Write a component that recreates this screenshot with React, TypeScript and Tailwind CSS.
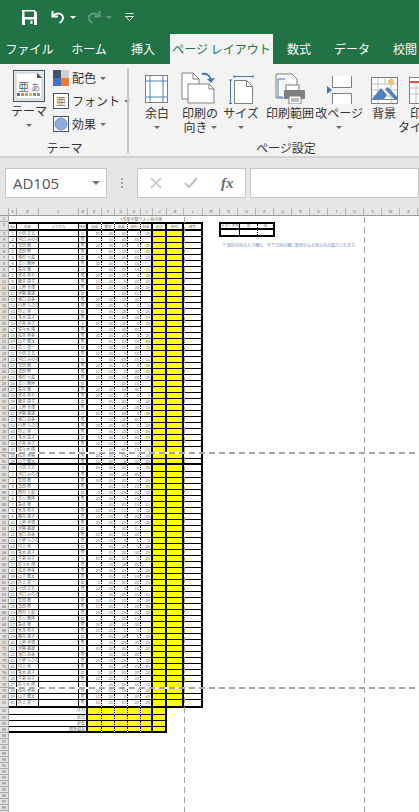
import React from "react";

const names = ["小田 正志","河口 みのる","安田 徹","高田 修","西村 七菜","吉川 雅伸","森本 徹","宮本 和与","藤井 靖子","上原 幸博","伊藤 義雄","坂口 由美","小原 ちひろ","村上 進","青木 昌子","中島 良子","佐々木 翔","松本 恵美","山下 健太","井上 真一"];
const s1 = ["45","","20","","5","32","","20","11","35","","20","20","",""];
const s2 = ["30","10","20","45","30","20","30","35","20","20","","30","20","45","15"];
const s3 = ["30","30","35","10","45","5","45","15","5","15","30","10","5","30","20"];
const s4 = ["5","45","5","15","20","10","15","4","20","20","11","30","5","5","30"];
const s5 = ["20","","20","45","10","","11","30","45","20","","","5","20","15"];
const gender = ["5","男","男","男","女","男","5","男","男","男","女","男","男","女","男"];

const cols = ["A","B","C","D","E","F","G","H","I","J","K","L","M","N","O","P","Q","R","S","T","U","V","W","X"];
const colW = ["w-[8px]","w-[22px]","w-[40px]","w-[9px]","w-[14px]","w-[13px]","w-[13px]","w-[13px]","w-[12px]","w-[14px]","w-[17px]","w-[19px]","w-[17px]","w-[18px]","w-[18px]","w-[18px]","w-[18px]","w-[18px]","w-[18px]","w-[18px]","w-[18px]","w-[18px]","w-[18px]","w-[18px]"];

const dot = "[border-right-style:dotted]";

function RowHead({ n, h }: { n: number; h: string }) {
  return (
    <div className={`${h} w-[9px] shrink-0 bg-[#e2e2e2] border-r border-b border-[#a8a8a8] text-[3.5px] leading-[5px] text-center text-[#555] overflow-hidden`}>
      {n}
    </div>
  );
}

function DataRow({ n, i, h, b }: { n: number; i: number; h: string; b: string }) {
  const k = i % 15;
  const c = `${b} border-black overflow-hidden whitespace-nowrap leading-[5px] text-[4px] text-[#666]`;
  return (
    <div className="flex">
      <RowHead n={n} h={h} />
      <div className={`${c} w-[8px] border-r text-center`}>{i + 1}</div>
      <div className={`${c} w-[22px] border-r pl-[1px]`}>{names[i % 20]}</div>
      <div className={`${c} w-[40px] border-r`}></div>
      <div className={`${c} w-[9px] border-r-2 text-center`}>{gender[k]}</div>
      <div className={`${c} w-[14px] border-r ${dot} text-right pr-[1px]`}>{s1[k]}</div>
      <div className={`${c} w-[13px] border-r ${dot} text-right pr-[1px]`}>{s2[k]}</div>
      <div className={`${c} w-[13px] border-r ${dot} text-right pr-[1px]`}>{s3[k]}</div>
      <div className={`${c} w-[13px] border-r ${dot} text-right pr-[1px]`}>{s4[k]}</div>
      <div className={`${c} w-[12px] border-r-2 text-right pr-[1px]`}>{s5[k]}</div>
      <div className={`${c} w-[14px] border-r-2 bg-[#ffff00]`}></div>
      <div className={`${c} w-[17px] border-r-2 bg-[#ffff00]`}></div>
      <div className={`${c} w-[19px] border-r-2`}></div>
    </div>
  );
}

function FootRow({ n, h, b, label }: { n: number; h: string; b: string; label: string }) {
  const c = `${b} border-black overflow-hidden bg-[#ffff00]`;
  return (
    <div className="flex">
      <RowHead n={n} h={h} />
      <div className={`${b} border-black border-r-2 w-[79px] text-right pr-[1px] text-[4px] leading-[5px] text-[#777]`}>{label}</div>
      <div className={`${c} w-[14px] border-r ${dot}`}></div>
      <div className={`${c} w-[13px] border-r ${dot}`}></div>
      <div className={`${c} w-[13px] border-r ${dot}`}></div>
      <div className={`${c} w-[13px] border-r ${dot}`}></div>
      <div className={`${c} w-[12px] border-r-2`}></div>
      <div className={`${c} w-[14px] border-r-2`}></div>
    </div>
  );
}

function Chev({ c = "border-t-[#6a6a6a]" }: { c?: string }) {
  return <span className={`inline-block w-0 h-0 border-x-[3px] border-x-transparent border-t-[3px] ${c}`} />;
}

function SmallBtn({ label, icon }: { label: string; icon: React.ReactNode }) {
  return (
    <div className="flex items-center h-[16px] text-[12px] text-[#333] whitespace-nowrap">
      <span className="w-[16px] h-[16px] shrink-0 mr-[3px]">{icon}</span>
      <span>{label}</span>
      <span className="ml-[4px] flex"><Chev /></span>
    </div>
  );
}

function Big({ w, ml, icon, l1, l2, chev }: { w: string; ml?: string; icon: React.ReactNode; l1: string; l2?: string; chev?: boolean }) {
  return (
    <div className={`${w} ${ml ?? ""} shrink-0 flex flex-col items-center`}>
      <div className="h-[36px] flex items-end justify-center w-full">{icon}</div>
      <div className="mt-[2px] text-[12px] leading-[14px] text-[#333] whitespace-nowrap flex flex-col items-center">
        <span>{l1}</span>
        {l2 ? (
          <span className="flex items-center">
            {l2}
            {chev ? <span className="ml-[3px] flex"><Chev /></span> : null}
          </span>
        ) : chev ? (
          <span className="h-[14px] flex items-center"><Chev /></span>
        ) : null}
      </div>
    </div>
  );
}

export default function App() {
  const rows: React.ReactNode[] = [];
  for (let i = 0; i < 39; i++) {
    rows.push(<DataRow key={i} n={i + 3} i={i} h="h-[6px]" b={i === 38 ? "h-[6px] border-b-2" : "h-[6px] border-b"} />);
  }
  for (let i = 0; i < 40; i++) {
    const h = i === 0 ? "h-[7px]" : i === 39 ? "h-[8px]" : "h-[6px]";
    const b = i === 0 ? "h-[7px] border-b" : i === 39 ? "h-[8px] border-b-2" : "h-[6px] border-b";
    rows.push(<DataRow key={100 + i} n={i + 42} i={i} h={h} b={b} />);
  }
  const empty: number[] = [];
  for (let i = 86; i < 100; i++) empty.push(i);
  const hc = "h-[9px] border-y-2 border-black overflow-hidden whitespace-nowrap";

  return (
    <div className="w-[419px] h-[812px] overflow-hidden relative bg-white" style={{ fontFamily: '"Noto Sans CJK JP","Noto Sans",sans-serif' }}>
      {/* quick access */}
      <div className="h-[34px] bg-[#217346] flex items-center">
        <svg className="ml-[22px] mt-[1px]" width="15" height="15" viewBox="0 0 15 15">
          <path d="M0 0h12.5L15 2.5V15H0z" fill="#fff" />
          <rect x="2.5" y="1.5" width="9.5" height="5.5" fill="#217346" />
          <rect x="3" y="9.5" width="9" height="5.5" fill="#217346" />
          <rect x="8.5" y="10.5" width="2" height="3.5" fill="#fff" />
        </svg>
        <svg className="ml-[13px]" width="16" height="15" viewBox="0 0 16 15" fill="none">
          <path d="M2.5 1v5.5H8" stroke="#fff" strokeWidth="2" />
          <path d="M3 6c2-3 7-3.5 9-1s1 6-2.5 8" stroke="#fff" strokeWidth="2" />
        </svg>
        <span className="ml-[4px] flex"><Chev c="border-t-white" /></span>
        <svg className="ml-[10px]" width="16" height="15" viewBox="0 0 16 15" fill="none">
          <path d="M13.5 1v5.5H8" stroke="#5f9c7d" strokeWidth="2" />
          <path d="M13 6c-2-3-7-3.5-9-1s-1 6 2.5 8" stroke="#5f9c7d" strokeWidth="2" />
        </svg>
        <span className="ml-[4px] flex"><Chev c="border-t-[#5f9c7d]" /></span>
        <svg className="ml-[13px]" width="9" height="8" viewBox="0 0 9 8">
          <rect x="0.5" y="0" width="8" height="1" fill="#e8f0ec" />
          <path d="M0.5 3.5h8L4.5 7.5z" fill="none" stroke="#e8f0ec" />
        </svg>
      </div>
      {/* tabs */}
      <div className="h-[30px] bg-[#217346] flex text-[12px] text-white">
        <div className="w-[59px] shrink-0 flex items-center justify-center">ファイル</div>
        <div className="w-[60px] shrink-0 flex items-center justify-center">ホーム</div>
        <div className="w-[48px] shrink-0 flex items-center justify-center">挿入</div>
        <div className="w-[103px] shrink-0 ml-[3px] bg-[#f3f3f3] text-[#217346] flex items-center justify-center whitespace-nowrap">ページ レイアウト</div>
        <div className="w-[52px] shrink-0 flex items-center justify-center">数式</div>
        <div className="w-[54px] shrink-0 flex items-center justify-center">データ</div>
        <div className="w-[52px] shrink-0 flex items-center justify-center">校閲</div>
      </div>
      {/* ribbon */}
      <div className="h-[94px] bg-[#f3f3f3] border-b-2 border-[#d2d2d2] flex pt-[4px]">
        <div className="w-[127px] h-[88px] shrink-0 flex flex-col">
          <div className="flex flex-1">
            <div className="w-[32px] ml-[13px] shrink-0 flex flex-col items-center">
              <svg className="mt-[2px] shrink-0" width="32" height="32" viewBox="0 0 32 32">
                <rect x="0.5" y="0.5" width="31" height="31" fill="#e8e8e8" stroke="#44546a" />
                <path d="M3 3h21l5 5v21H3z" fill="#fff" stroke="#c8c8c8" />
                <path d="M24 3l5 5h-5z" fill="#44546a" />
                <text x="5" y="21" fontSize="11" fill="#5a6b80">亜</text>
                <text x="18" y="21" fontSize="9" fill="#5a6b80">あ</text>
                <rect x="4" y="23" width="3" height="3" fill="#4472c4" />
                <rect x="8" y="23" width="3" height="3" fill="#ed7d31" />
                <rect x="12" y="23" width="3" height="3" fill="#a5a5a5" />
                <rect x="16" y="23" width="3" height="3" fill="#ffc000" />
                <rect x="20" y="23" width="3" height="3" fill="#5b9bd5" />
                <rect x="24" y="23" width="3" height="3" fill="#70ad47" />
              </svg>
              <div className="mt-[2px] text-[12px] leading-[14px] text-[#333] whitespace-nowrap">テーマ</div>
              <div className="h-[14px] flex items-center"><Chev /></div>
            </div>
            <div className="ml-[8px] pt-[2px] flex flex-col gap-[7px]">
              <SmallBtn label="配色" icon={
                <svg width="16" height="16" viewBox="0 0 16 16">
                  <rect width="8" height="8" fill="#44546a" /><rect x="8" width="8" height="8" fill="#d0cece" />
                  <rect y="8" width="8" height="8" fill="#4472c4" /><rect x="8" y="8" width="8" height="8" fill="#ed7d31" />
                </svg>} />
              <SmallBtn label="フォント" icon={
                <svg width="16" height="16" viewBox="0 0 16 16">
                  <rect x="0.5" y="0.5" width="15" height="15" fill="#fff" stroke="#44546a" />
                  <text x="3" y="12" fontSize="10" fill="#b06a30">亜</text>
                </svg>} />
              <SmallBtn label="効果" icon={
                <svg width="16" height="16" viewBox="0 0 16 16">
                  <rect x="0.5" y="0.5" width="15" height="15" fill="#fff" stroke="#44546a" />
                  <circle cx="8" cy="8" r="6" fill="#8faadc" stroke="#6f8dc4" />
                </svg>} />
            </div>
          </div>
          <div className="h-[16px] text-[12px] leading-[16px] text-center text-[#333] pl-[2px]">テーマ</div>
        </div>
        <div className="w-[2px] h-[85px] shrink-0 bg-[#c6c6c6]" />
        <div className="flex-1 min-w-0 flex flex-col h-[88px]">
          <div className="flex flex-1 pl-[11px]">
            <Big w="w-[34px]" l1="余白" chev icon={
              <svg width="24" height="29" viewBox="0 0 24 29" fill="none">
                <rect x="0.5" y="0.5" width="22" height="27" fill="#fff" stroke="#7f7f7f" />
                <path d="M5 1v26M18 1v26M1 6h21M1 22h21" stroke="#4f81bd" />
              </svg>} />
            <Big w="w-[44px]" ml="ml-[4px]" l1="印刷の" l2="向き" chev icon={
              <svg width="38" height="32" viewBox="0 0 38 32" fill="none">
                <path d="M1 1h11l6 6v20H1z" fill="#fff" stroke="#7f7f7f" />
                <path d="M12 1v6h6" stroke="#7f7f7f" />
                <path d="M7 12h21l5 5v14H7z" fill="#fff" stroke="#7f7f7f" />
                <path d="M28 12v5h5" stroke="#7f7f7f" />
                <path d="M21 2c4-1 8 1 9 6" stroke="#4472c4" strokeWidth="2" />
                <path d="M26 7l4 4 4-5z" fill="#4472c4" />
              </svg>} />
            <Big w="w-[36px]" ml="ml-[1px]" l1="サイズ" chev icon={
              <svg width="25" height="29" viewBox="0 0 25 29" fill="none">
                <path d="M5 1.5h19M5 0v3M24 0v3M1.5 5v24M0 5h3M0 28.5h3" stroke="#4472c4" />
                <path d="M5.5 5.5h12l6 6v17h-18z" fill="#fff" stroke="#7f7f7f" />
                <path d="M17.5 5.5v6h6" stroke="#7f7f7f" />
              </svg>} />
            <Big w="w-[60px]" ml="ml-[1px]" l1="印刷範囲" chev icon={
              <svg width="31" height="31" viewBox="0 0 31 31" fill="none">
                <path d="M1 1h16l5 5v7M1 1v24h8" fill="#fff" stroke="#7f7f7f" />
                <path d="M3 6h7M3 6v18h5" stroke="#4472c4" />
                <rect x="11" y="12" width="13" height="7" fill="#fff" stroke="#7f7f7f" />
                <rect x="9" y="17" width="21" height="9" rx="1" fill="#7f7f7f" />
                <rect x="14" y="23" width="12" height="8" fill="#fff" stroke="#7f7f7f" />
                <path d="M16 26h8M16 28h8" stroke="#7f7f7f" />
              </svg>} />
            <Big w="w-[38px]" l1="改ページ" chev icon={
              <svg width="25" height="28" viewBox="0 0 25 28" fill="none">
                <rect x="5.5" y="0" width="19" height="11.5" fill="#fff" />
                <path d="M5.5 11.5h19M5.5 0v11.5M24.5 0v11.5" stroke="#7f7f7f" />
                <rect x="5.5" y="17" width="19" height="11" fill="#fff" />
                <path d="M5.5 28V17.5h19V28" stroke="#7f7f7f" />
                <path d="M0 10l5 4-5 4z" fill="#4472c4" />
              </svg>} />
            <Big w="w-[38px]" ml="ml-[7px]" l1="背景" icon={
              <svg width="27" height="27" viewBox="0 0 27 27" fill="none">
                <rect x="0.5" y="0.5" width="26" height="26" fill="#fff" stroke="#7f7f7f" />
                <path d="M7 1v25M14 1v7M20 1v25M1 7h25M1 13h25M1 19h25" stroke="#bfbfbf" />
                <path d="M1 22l9-11 6 7-3 4z" fill="#4f81bd" />
                <path d="M14 12l3-2 9 10v2h-3z" fill="#4f81bd" />
                <rect x="1" y="22" width="25" height="1" fill="#7f7f7f" />
                <circle cx="20" cy="5" r="3" fill="#f0c078" />
              </svg>} />
            <Big w="w-[38px]" l1="印刷" l2="タイトル" icon={
              <svg width="27" height="27" viewBox="0 0 27 27" fill="none">
                <rect x="0.5" y="0.5" width="26" height="26" fill="#fff" stroke="#7f7f7f" />
                <path d="M1 5h25" stroke="#e0533f" strokeWidth="2" />
                <path d="M1 11h25M1 17h25M7 6v20" stroke="#bfbfbf" />
              </svg>} />
          </div>
          <div className="h-[16px] text-[12px] leading-[16px] text-[#333] pl-[127px]">ページ設定</div>
        </div>
      </div>
      {/* formula bar */}
      <div className="h-[50px] bg-[#e6e6e6] pt-[10px] flex">
        <div className="ml-[5px] w-[102px] h-[30px] bg-white border border-[#c6c6c6] flex items-center pl-[7px] pr-[6px] justify-between text-[15px] text-[#555]" style={{ fontFamily: '"Open Sans",sans-serif' }}>
          <span>AD105</span>
          <span className="w-0 h-0 border-x-[4px] border-x-transparent border-t-[4px] border-t-[#777]" />
        </div>
        <div className="w-[30px] h-[30px] shrink-0 flex flex-col items-center justify-center gap-[2px]">
          <span className="w-[2px] h-[2px] bg-[#a8a8a8]" />
          <span className="w-[2px] h-[2px] bg-[#a8a8a8]" />
          <span className="w-[2px] h-[2px] bg-[#a8a8a8]" />
        </div>
        <div className="w-[109px] h-[30px] shrink-0 bg-white border border-[#c6c6c6] flex items-center pl-[12px]">
          <svg width="12" height="12" viewBox="0 0 12 12" fill="none"><path d="M1 1l10 10M11 1L1 11" stroke="#c4c4c4" strokeWidth="1.6" /></svg>
          <svg className="ml-[22px]" width="14" height="12" viewBox="0 0 14 12" fill="none"><path d="M1 6l4 4 8-9" stroke="#c4c4c4" strokeWidth="2.2" /></svg>
          <span className="ml-[23px] text-[15px] font-bold italic text-[#6a6a6a]" style={{ fontFamily: '"Liberation Serif",serif' }}>fx</span>
        </div>
        <div className="ml-[4px] flex-1 h-[30px] bg-white border border-[#c6c6c6]" />
      </div>
      {/* column headers */}
      <div className="h-[8px] bg-[#e6e6e6] border-b border-[#9c9c9c] flex">
        <div className="w-[9px] shrink-0 border-r border-[#b4b4b4]" />
        {cols.map((c, i) => (
          <div key={c} className={`${colW[i]} shrink-0 border-r border-[#b4b4b4] text-[4px] leading-[7px] text-center text-[#666]`}>{c}</div>
        ))}
      </div>
      {/* sheet */}
      <div className="flex items-start">
        <div className="w-[203px] shrink-0">
          <div className="flex">
            <RowHead n={1} h="h-[6px]" />
            <div className="w-[194px] h-[6px] pl-[111px] text-[4px] leading-[6px] text-[#666] whitespace-nowrap">7月度中間テスト得点表</div>
          </div>
          <div className="flex text-[3.5px] leading-[5px] text-[#666] text-center">
            <RowHead n={2} h="h-[9px]" />
            <div className={`w-[8px] ${hc} border-r`}>No</div>
            <div className={`w-[22px] ${hc} border-r`}>氏名</div>
            <div className={`w-[40px] ${hc} border-r`}>ふりがな</div>
            <div className={`w-[9px] ${hc} border-r-2`}>性別</div>
            <div className={`w-[14px] ${hc} border-r ${dot}`}>国語</div>
            <div className={`w-[13px] ${hc} border-r ${dot}`}>数学</div>
            <div className={`w-[13px] ${hc} border-r ${dot}`}>英語</div>
            <div className={`w-[13px] ${hc} border-r ${dot}`}>理科</div>
            <div className={`w-[12px] ${hc} border-r-2`}>社会</div>
            <div className={`w-[14px] ${hc} border-r-2`}>合計</div>
            <div className={`w-[17px] ${hc} border-r-2`}>順位</div>
            <div className={`w-[19px] ${hc} border-r-2`}>備考</div>
          </div>
          {rows}
          <FootRow n={82} h="h-[7px]" b="h-[7px] border-b" label="平均" />
          <FootRow n={83} h="h-[6px]" b="h-[6px] border-b" label="最高" />
          <FootRow n={84} h="h-[6px]" b="h-[6px] border-b" label="最低" />
          <FootRow n={85} h="h-[6px]" b="h-[6px] border-b-2" label="標準偏差" />
          {empty.map((n) => (
            <RowHead key={n} n={n} h="h-[6px]" />
          ))}
        </div>
        <div className="ml-[16px] mt-[6px]">
          <div className="w-[56px] h-[15px] border-2 border-black text-[3.5px] leading-[4px] text-[#666] text-center">
            <div className="flex h-[6px] border-b-2 border-black">
              <div className="w-[19px] border-r border-black whitespace-nowrap overflow-hidden">テスト平均</div>
              <div className={`w-[18px] border-r border-black ${dot}`}>高</div>
              <div className="w-[15px]">低</div>
            </div>
            <div className="flex h-[5px]">
              <div className="w-[19px] border-r border-black" />
              <div className={`w-[18px] border-r border-black ${dot}`} />
              <div className="w-[15px]" />
            </div>
          </div>
          <div className="mt-[6px] ml-[3px] text-[4px] leading-[5px] text-[#8a93b8] whitespace-nowrap">※ 個別の得点入力欄は、全ての得点欄に数値がある場合のみ集計されます。</div>
        </div>
      </div>
      {/* page-break lines */}
      <div className="absolute left-[9px] right-0 top-[452px] h-[2px] bg-[repeating-linear-gradient(to_right,#a6a6a6_0,#a6a6a6_6px,#ffffff_6px,#ffffff_10px)]" />
      <div className="absolute left-[9px] right-0 top-[687px] h-[2px] bg-[repeating-linear-gradient(to_right,#a6a6a6_0,#a6a6a6_6px,#ffffff_6px,#ffffff_10px)]" />
      <div className="absolute top-[217px] bottom-0 left-[184px] w-[1px] bg-[repeating-linear-gradient(to_bottom,#a6a6a6_0,#a6a6a6_6px,transparent_6px,transparent_10px)]" />
      <div className="absolute top-[217px] bottom-0 left-[364px] w-[1px] bg-[repeating-linear-gradient(to_bottom,#a6a6a6_0,#a6a6a6_6px,transparent_6px,transparent_10px)]" />
    </div>
  );
}
